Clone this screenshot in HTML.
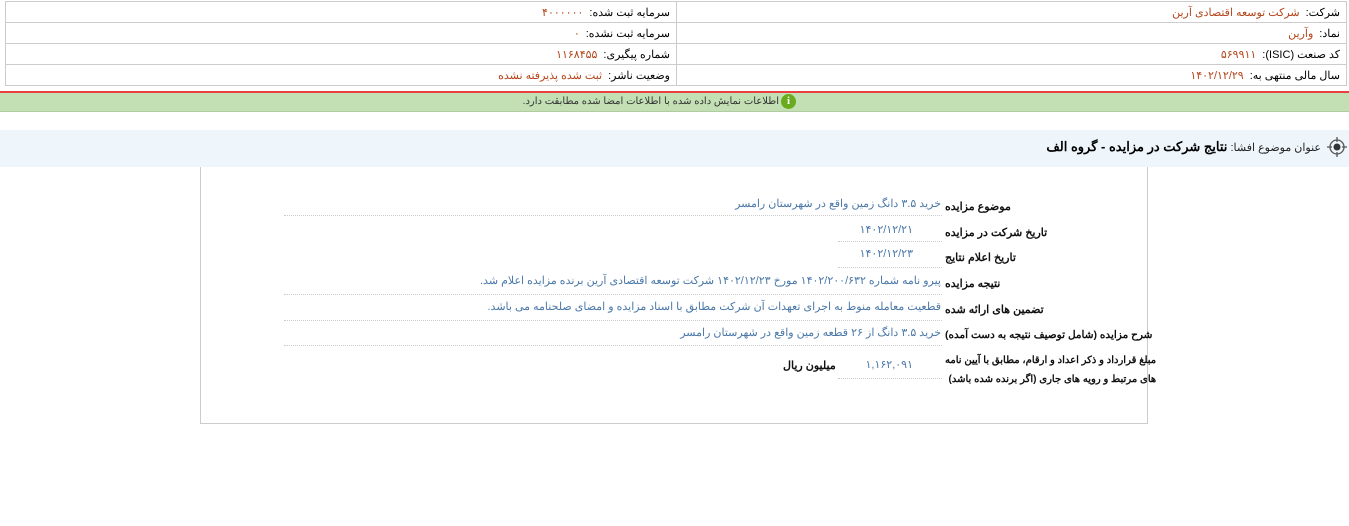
<!DOCTYPE html>
<html><head><meta charset="utf-8"><style>
body{margin:0;width:1349px;height:526px;background:#fff;font-family:"Liberation Sans","Noto Sans CJK SC",sans-serif;font-size:11px;position:relative;overflow:hidden}
.a{position:absolute;direction:rtl;white-space:nowrap}
table{position:absolute;left:5px;top:1px;width:1342px;border-collapse:collapse;direction:rtl}
td{border:1px solid #ccc;height:20px;padding:0 6px;font-size:11px;color:#000}
td span{color:#b5451b;margin-right:6px}
.l{font-weight:bold;color:#111;font-size:11px;left:945px}
.v{color:#4a78a8}
.dot{position:absolute;border-bottom:1px dotted #ccc;height:0}
</style></head><body>
<table>
<tr><td style="width:657px">شرکت:<span>شرکت توسعه اقتصادی آرین</span></td><td>سرمایه ثبت شده:<span>۴۰۰۰۰۰۰</span></td></tr>
<tr><td>نماد:<span>وآرین</span></td><td>سرمایه ثبت نشده:<span>۰</span></td></tr>
<tr><td>کد صنعت (ISIC):<span>۵۶۹۹۱۱</span></td><td>شماره پیگیری:<span>۱۱۶۸۴۵۵</span></td></tr>
<tr><td>سال مالی منتهی به:<span>۱۴۰۲/۱۲/۲۹</span></td><td>وضعیت ناشر:<span>ثبت شده پذیرفته نشده</span></td></tr>
</table>
<div style="position:absolute;left:0;top:91px;width:1349px;height:2px;background:#e84040"></div>
<div style="position:absolute;left:0;top:93px;width:1349px;height:18px;background:#c2e0b4;border-bottom:1px solid #b0cca0"></div>
<div class="a" style="right:570px;top:95px;color:#333;font-size:10px;top:96px">اطلاعات نمایش داده شده با اطلاعات امضا شده مطابقت دارد.</div>
<div style="position:absolute;left:781px;top:94px;width:15px;height:15px;border-radius:50%;background:#6aaa1e;color:#fff;font-weight:bold;font-size:11px;text-align:center;line-height:15px;font-family:'Liberation Serif',serif">i</div>
<div style="position:absolute;left:0;top:130px;width:1349px;height:37px;background:#eef6fc"></div>
<svg style="position:absolute;left:1325px;top:135px" width="24" height="24" viewBox="0 0 24 24"><circle cx="12" cy="12" r="7" fill="none" stroke="#555" stroke-width="1.3"/><circle cx="12" cy="12" r="3.5" fill="#333"/><path d="M12 2v5M12 17v5M2 12h5M17 12h5" stroke="#555" stroke-width="1.3"/></svg>
<div class="a" style="right:28px;top:139px;font-size:11px;color:#222">عنوان موضوع افشا: <b style="font-size:13px;color:#000">نتایج شرکت در مزایده - گروه الف</b></div>
<div style="position:absolute;left:200px;top:167px;width:946px;height:256px;border:1px solid #ccc;border-top:none"></div>
<div class="a l" style="top:200px">موضوع مزایده</div>
<div class="a v" style="right:408px;top:197px">خرید ۳.۵ دانگ زمین واقع در شهرستان رامسر</div>
<div class="dot" style="left:284px;width:658px;top:215px"></div>
<div class="a l" style="top:226px">تاریخ شرکت در مزایده</div>
<div class="a v" style="right:436px;top:223px">۱۴۰۲/۱۲/۲۱</div>
<div class="dot" style="left:838px;width:104px;top:241px"></div>
<div class="a l" style="top:251px">تاریخ اعلام نتایج</div>
<div class="a v" style="right:436px;top:247px">۱۴۰۲/۱۲/۲۳</div>
<div class="dot" style="left:838px;width:104px;top:267px"></div>
<div class="a l" style="top:277px">نتیجه مزایده</div>
<div class="a v" style="right:408px;top:274px">پیرو نامه شماره ۱۴۰۲/۲۰۰/۶۳۲ مورخ ۱۴۰۲/۱۲/۲۳ شرکت توسعه اقتصادی آرین برنده مزایده اعلام شد.</div>
<div class="dot" style="left:284px;width:658px;top:294px"></div>
<div class="a l" style="top:303px">تضمین های ارائه شده</div>
<div class="a v" style="right:408px;top:300px">قطعیت معامله منوط به اجرای تعهدات آن شرکت مطابق با اسناد مزایده و امضای صلحنامه می باشد.</div>
<div class="dot" style="left:284px;width:658px;top:320px"></div>
<div class="a l" style="top:329px;font-size:10.5px">شرح مزایده (شامل توصیف نتیجه به دست آمده)</div>
<div class="a v" style="right:408px;top:326px">خرید ۳.۵ دانگ از ۲۶ قطعه زمین واقع در شهرستان رامسر</div>
<div class="dot" style="left:284px;width:658px;top:345px"></div>
<div class="a l" style="top:351px;line-height:19px;font-size:10px">مبلغ قرارداد و ذکر اعداد و ارقام، مطابق با آیین نامه<br>های مرتبط و رویه های جاری (اگر برنده شده باشد)</div>
<div class="a v" style="right:436px;top:358px">۱,۱۶۲,۰۹۱</div>
<div class="a l" style="left:783px;top:359px">میلیون ریال</div>
<div class="dot" style="left:838px;width:104px;top:378px"></div>
</body></html>
